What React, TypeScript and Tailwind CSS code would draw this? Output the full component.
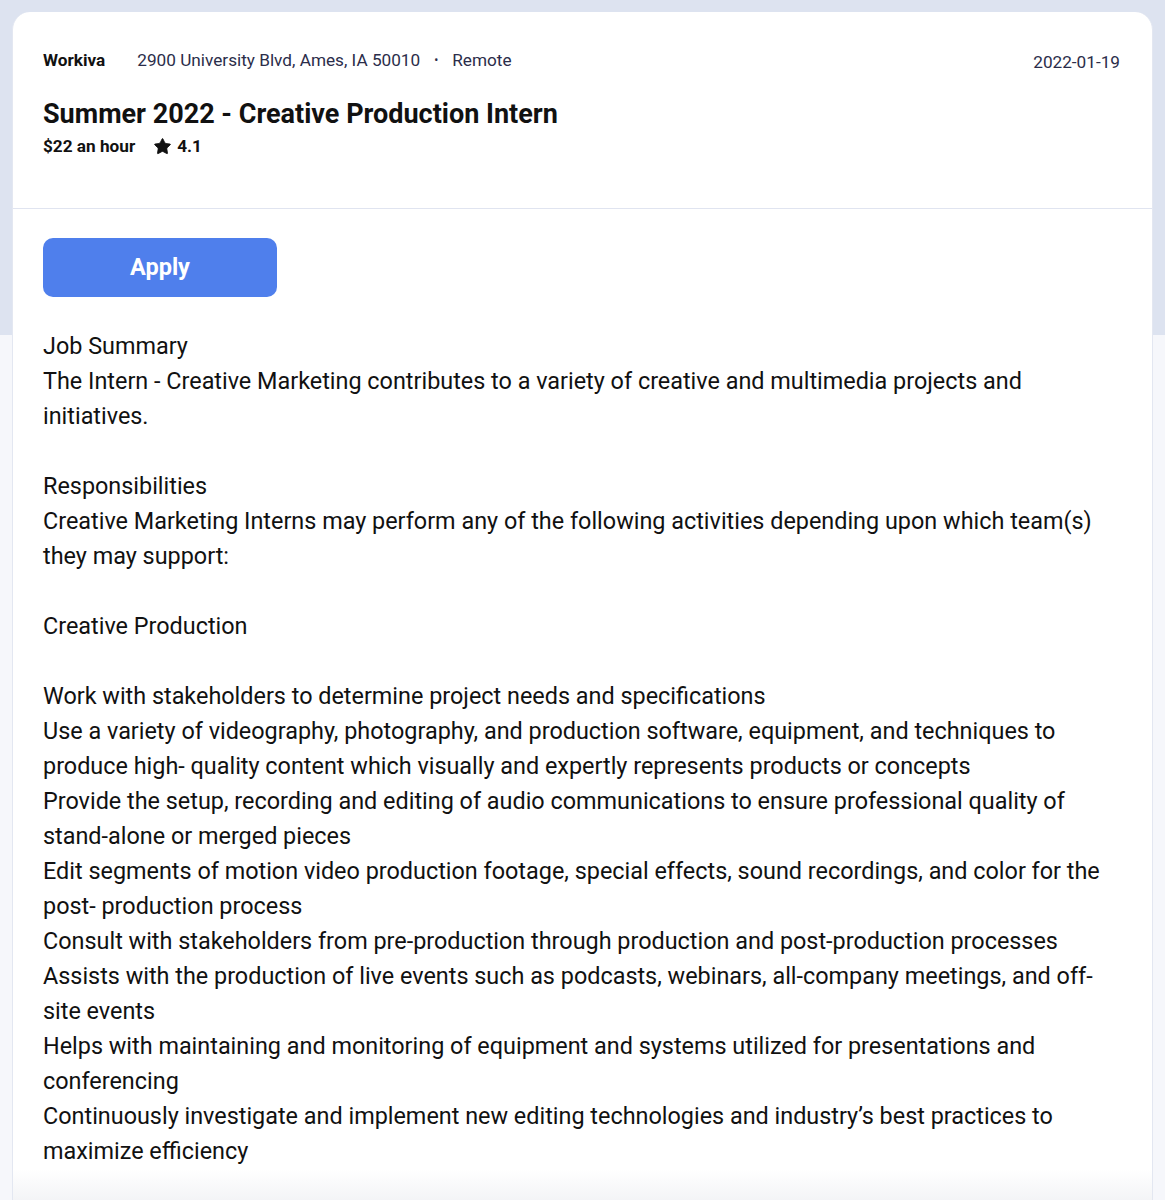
import { Star } from 'lucide-react';

const bullets = [
  'Work with stakeholders to determine project needs and specifications',
  'Use a variety of videography, photography, and production software, equipment, and techniques to produce high- quality content which visually and expertly represents products or concepts',
  'Provide the setup, recording and editing of audio communications to ensure professional quality of stand-alone or merged pieces',
  'Edit segments of motion video production footage, special effects, sound recordings, and color for the post- production process',
  'Consult with stakeholders from pre-production through production and post-production processes',
  'Assists with the production of live events such as podcasts, webinars, all-company meetings, and off-site events',
  'Helps with maintaining and monitoring of equipment and systems utilized for presentations and conferencing',
  'Continuously investigate and implement new editing technologies and industry\u2019s best practices to maximize efficiency',
];

export default function App() {
  return (
    <div className="relative min-h-[1200px] bg-[#f6f7fb] font-['Roboto',sans-serif] overflow-hidden">
      {/* top band */}
      <div className="absolute inset-x-0 top-0 h-[335px] bg-[#dde3f0]" />

      <div className="relative px-3 pt-3">
        <div className="bg-white rounded-t-[18px] border-x border-[#e3e7f1]">
          {/* Header */}
          <div className="pl-[30px] pr-[32px] pt-[38px] pb-[51px] border-b border-[#e0e4f0]">
            <div className="flex items-start justify-between">
              <div className="flex items-center text-[17.2px] leading-[20px]">
                <span className="font-bold text-[#111]">Workiva</span>
                <span className="ml-[32px] text-[#2b2d4a]">2900 University Blvd, Ames, IA 50010</span>
                <span className="mx-[14px] text-[#2b2d4a] text-[12px]">•</span>
                <span className="text-[#2b2d4a]">Remote</span>
              </div>
              <span className="text-[17.2px] leading-[20px] mt-[2px] text-[#2b2d4a]">2022-01-19</span>
            </div>
            <h1 className="mt-[26px] text-[27px] leading-[32px] font-bold text-[#111]">
              Summer 2022 - Creative Production Intern
            </h1>
            <div className="mt-[5px] flex items-center text-[17.2px] leading-[22px] font-bold text-[#111]">
              <span>$22 an hour</span>
              <Star className="ml-[18px] w-[19px] h-[19px] fill-[#111] text-[#111]" strokeWidth={1} />
              <span className="ml-[5px]">4.1</span>
            </div>
          </div>

          {/* Body */}
          <div className="px-[30px] pt-[29px]">
            <button className="w-[234px] h-[59px] rounded-[10px] bg-[#4f7fec] text-white text-[23.5px] font-bold">
              Apply
            </button>
            <div className="mt-[32px] text-[23.4px] leading-[35px] text-[#111]">
              <p>Job Summary</p>
              <p>The Intern - Creative Marketing contributes to a variety of creative and multimedia projects and initiatives.</p>
              <p className="mt-[35px]">Responsibilities</p>
              <p>Creative Marketing Interns may perform any of the following activities depending upon which team(s) they may support:</p>
              <p className="mt-[35px]">Creative Production</p>
              <div className="mt-[35px]">
                {bullets.map((b) => (
                  <p key={b}>{b}</p>
                ))}
              </div>
            </div>
          </div>
          <div className="h-[40px] bg-gradient-to-b from-white to-[#f0f1f4]" />
        </div>
      </div>
    </div>
  );
}
